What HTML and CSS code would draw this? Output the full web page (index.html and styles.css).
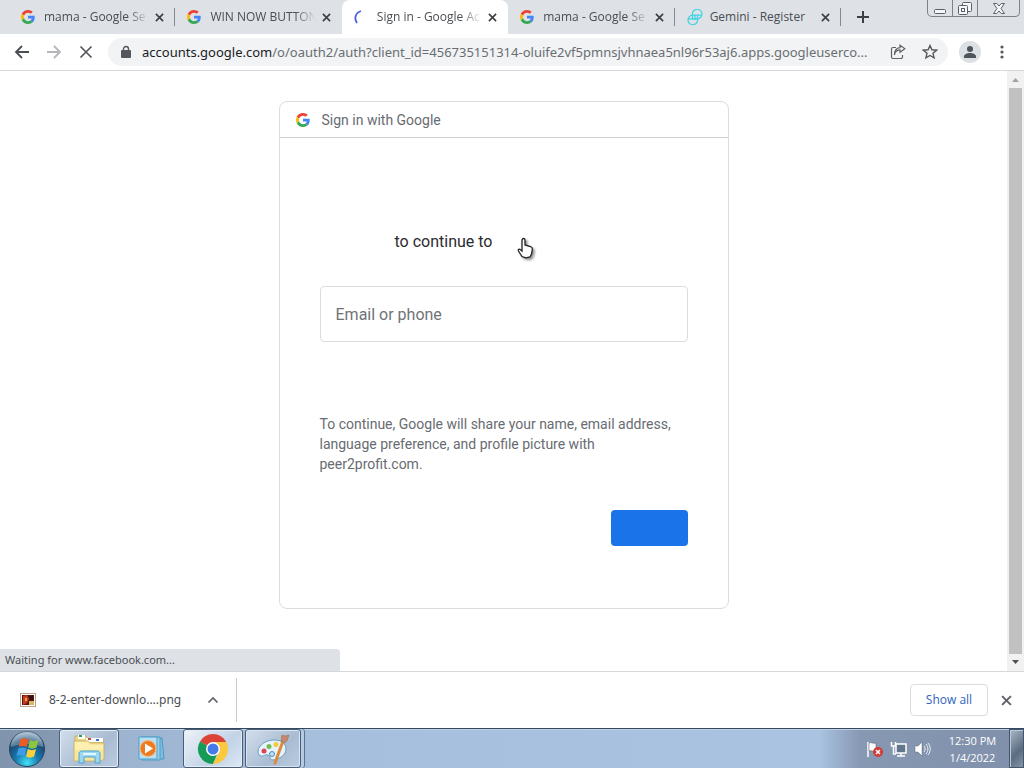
FILE: index.html
```html
<!DOCTYPE html>
<html lang="en">
<head>
<meta charset="utf-8">
<meta name="viewport" content="width=device-width, initial-scale=1">
<title>Sign in - Google Accounts</title>
<link rel="stylesheet" href="styles.css">
</head>
<body>
<svg class="defs" aria-hidden="true">
  <symbol id="google" viewBox="0 0 48 48">
    <path fill="#ea4335" d="M24 9.500c3.540 0 6.710 1.220 9.210 3.600l6.850-6.850C35.900 2.380 30.470 0 24 0 14.620 0 6.510 5.380 2.560 13.220l7.980 6.190C12.430 13.720 17.740 9.500 24 9.500z"/>
    <path fill="#4285f4" d="M46.980 24.550c0-1.570-.15-3.090-.38-4.550H24v9.020h12.940c-.58 2.960-2.260 5.480-4.780 7.180l7.730 6c4.510-4.180 7.090-10.360 7.090-17.650z"/>
    <path fill="#fbbc05" d="M10.530 28.590c-.48-1.450-.76-2.990-.76-4.590s.27-3.140.76-4.590l-7.980-6.190C.92 16.460 0 20.120 0 24s.92 7.540 2.560 10.780l7.970-6.190z"/>
    <path fill="#34a853" d="M24 48c6.480 0 11.930-2.130 15.890-5.810l-7.730-6c-2.150 1.450-4.920 2.300-8.160 2.300-6.260 0-11.570-4.220-13.470-9.910l-7.980 6.190C6.510 42.620 14.620 48 24 48z"/>
  </symbol>
  <symbol id="close" viewBox="0 0 10 10"><path d="M1 1l8 8M9 1L1 9" fill="none" stroke="currentColor" stroke-width="1.800"/></symbol>
</svg>

<header class="tabstrip">
  <nav class="tabs" aria-label="Tabs">
    <div class="tab"><svg class="favicon"><use href="#google"/></svg><a href="#" class="tab-title">mama - Google Se</a><button class="tab-close" aria-label="Close tab"><svg><use href="#close"/></svg></button></div>
    <div class="tab before-active"><svg class="favicon"><use href="#google"/></svg><a href="#" class="tab-title">WIN NOW BUTTON</a><button class="tab-close" aria-label="Close tab"><svg><use href="#close"/></svg></button></div>
    <div class="tab active"><svg class="favicon" viewBox="0 0 14 14"><path d="M7 1C1 3 0 9 3 13" fill="none" stroke="#4a5ee0" stroke-width="1.800"/></svg><a href="#" class="tab-title">Sign in - Google Ac</a><button class="tab-close" aria-label="Close tab"><svg><use href="#close"/></svg></button></div>
    <div class="tab"><svg class="favicon"><use href="#google"/></svg><a href="#" class="tab-title">mama - Google Se</a><button class="tab-close" aria-label="Close tab"><svg><use href="#close"/></svg></button></div>
    <div class="tab"><svg class="favicon gemini" viewBox="0 0 16 16"><g fill="none" stroke="#3fd3e3" stroke-width="1.200"><path d="M5.500 9.800V6A4.800 4.800 0 1 1 10.800 9.800H5.500z"/><path d="M10.500 6.200V10A4.800 4.800 0 1 1 5.200 6.200h5.300zM6.500 6.200h8.300M1.200 9.800h8.300M8 6.200v3.600"/></g></svg><a href="#" class="tab-title">Gemini - Register</a><button class="tab-close" aria-label="Close tab"><svg><use href="#close"/></svg></button></div>
  </nav>
  <button class="new-tab" aria-label="New tab"><svg viewBox="0 0 12 12"><path d="M6 0v12M0 6h12" stroke="currentColor" stroke-width="2"/></svg></button>
  <div class="window-controls">
    <button aria-label="Minimize"><svg viewBox="0 0 14 14"><rect x="1.500" y="8.500" width="11" height="4" rx="1" fill="#f6f7f9" stroke="#5c6067"/></svg></button>
    <button aria-label="Restore"><svg viewBox="0 0 14 14"><g fill="#f6f7f9" stroke="#5c6067"><rect x="4.500" y="1.500" width="9" height="9" rx="1"/><rect x=".5" y="4.500" width="9" height="9" rx="1"/><rect x="3.500" y="7.500" width="3" height="3"/></g></svg></button>
    <button class="wide" aria-label="Close window"><svg viewBox="0 0 14 14"><path d="M1.500 2.500h3.200L7 5l2.300-2.500h3.200L9 7.500l3.500 5H9.300L7 10l-2.300 2.500H1.500L5 7.500z" fill="#f6f7f9" stroke="#5c6067"/></svg></button>
  </div>
</header>

<div class="toolbar">
  <button class="tool" aria-label="Back"><svg viewBox="0 0 16 16"><path d="M15 8H2M8 2L2 8l6 6" fill="none" stroke="#4a4d51" stroke-width="1.800"/></svg></button>
  <button class="tool" aria-label="Forward"><svg viewBox="0 0 16 16"><path d="M1 8h13M8 2l6 6-6 6" fill="none" stroke="#b4b6b9" stroke-width="1.800"/></svg></button>
  <button class="tool" aria-label="Stop loading"><svg viewBox="0 0 16 16"><path d="M2.500 2.500l11 11M13.500 2.500l-11 11" fill="none" stroke="#54575b" stroke-width="1.700"/></svg></button>
  <div class="omnibox">
    <svg class="lock" viewBox="0 0 10 14"><path d="M2.500 6V4a2.500 2.500 0 0 1 5 0v2" fill="none" stroke="#54575b" stroke-width="1.400"/><rect x="0" y="5" width="10" height="8" rx="1" fill="#54575b"/></svg>
    <div class="url" role="textbox" contenteditable="true" aria-label="Address bar" spellcheck="false"><span class="host">accounts.google.com</span>/o/oauth2/auth?client_id=456735151314-oluife2vf5pmnsjvhnaea5nl96r53aj6.apps.googleuserco...</div>
    <button class="tool" aria-label="Share"><svg viewBox="0 0 16 16"><path d="M6 3.500H3A1.500 1.500 0 0 0 1.500 5v8A1.500 1.500 0 0 0 3 14.500h8a1.500 1.500 0 0 0 1.500-1.500v-2M4.500 11c.3-3.500 2-5 5.500-5.200V8.300L14.800 4.800 10 1.300v2.300C6.200 4 4.500 6.500 4.500 11z" fill="none" stroke="#5f6368" stroke-width="1.200"/></svg></button>
    <button class="tool" aria-label="Bookmark"><svg viewBox="0 0 16 16"><path d="M8 1.500l1.900 4.300 4.700.4-3.600 3.100 1.100 4.600L8 11.500l-4.100 2.400L5 9.300 1.400 6.200l4.700-.4z" fill="none" stroke="#54575b" stroke-width="1.400"/></svg></button>
  </div>
  <button class="avatar" aria-label="Profile"><svg viewBox="0 0 22 22"><circle cx="11" cy="11" r="11" fill="#dcdfe3"/><circle cx="11" cy="8" r="3" fill="#4d545c"/><path d="M5 17v-1.500c0-2 3-3.500 6-3.500s6 1.500 6 3.500V17z" fill="#4d545c"/></svg></button>
  <button class="tool" aria-label="Menu"><svg viewBox="0 0 16 16"><g fill="#54575b"><circle cx="8" cy="3" r="1.600"/><circle cx="8" cy="8" r="1.600"/><circle cx="8" cy="13" r="1.600"/></g></svg></button>
</div>

<div class="viewport">
  <main class="page">
    <section class="card">
      <div class="card-head"><svg class="brand"><use href="#google"/></svg>Sign in with Google</div>
      <form class="card-body">
        <p class="continue">to continue to</p>
        <input class="email" type="text" aria-label="Email or phone" placeholder="Email or phone">
        <p class="disclosure">To continue, Google will share your name, email address, language preference, and profile picture with peer2profit.com.</p>
        <button class="next" type="button" aria-label="Next"></button>
      </form>
    </section>
  </main>
  <div class="scrollbar">
    <svg class="arrow" viewBox="0 0 17 17"><path d="M5 11l3.500-4 3.500 4z" fill="#a3a3a3"/></svg>
    <div class="thumb"></div>
    <svg class="arrow" viewBox="0 0 17 17"><path d="M5 6l3.500 4L12 6z" fill="#505050"/></svg>
  </div>
  <div class="status">Waiting for www.facebook.com...</div>
  <svg class="cursor" viewBox="0 0 18 22"><path d="M5 19.500L1.500 14c-.8-1.500.8-2.500 2-1.300L5 14V3c0-2 3-2 3 0v5l5.500 1.500c1.500.5 2 1.500 1.800 3L14.500 17l-1.500 3-4 .8z" fill="#fff" stroke="#222" stroke-width="1.300"/></svg>
</div>

<section class="shelf" aria-label="Downloads">
  <div class="download">
    <svg class="thumbnail" viewBox="0 0 16 14"><rect x=".5" y=".5" width="15" height="13" fill="#fff" stroke="#b9a184"/><path d="M2 2h12v10H2z" fill="#5c1410"/><path d="M3 3l4-1 2 4-2 4-4 2z" fill="#c63a20"/><path d="M9 3l4-1v4l-3 1z" fill="#301410"/><path d="M9 8h5v4H9z" fill="#d5bb60"/><path d="M5 5h2v3H5z" fill="#f1a34a"/></svg>
    <a href="#" class="file-name">8-2-enter-downlo....png</a>
    <button class="chevron" aria-label="Download options"><svg viewBox="0 0 12 12"><path d="M1.500 8.500L6 4l4.500 4.500" fill="none" stroke="#5f6368" stroke-width="1.700"/></svg></button>
  </div>
  <button class="show-all">Show all</button>
  <button class="shelf-close" aria-label="Close downloads"><svg><use href="#close"/></svg></button>
</section>

<footer class="taskbar">
  <button class="start" aria-label="Start"><svg viewBox="0 0 38 38">
    <defs><radialGradient id="orb" cx=".5" cy=".9" r=".85"><stop offset="0" stop-color="#45e0f4"/><stop offset=".4" stop-color="#167bb2"/><stop offset=".75" stop-color="#1c4b74"/><stop offset="1" stop-color="#8ba9c3"/></radialGradient></defs>
    <circle cx="19" cy="19" r="17.500" fill="url(#orb)" stroke="#24445f"/>
    <path d="M3 17a16 16 0 0 1 32 0c-10-4-22-4-32 0z" fill="#fff" opacity=".28"/>
    <path d="M12.500 9.500c3-2 5.500-1.500 8 0l-1.800 7.500c-2.500-1.500-5-1.500-8 0z" fill="#ee5a24"/>
    <path d="M22 10c3 1.500 5.500 1.500 8.500 0l-2 7.500c-3 1.500-5.500 1.500-8.300 0z" fill="#8cc63e"/>
    <path d="M10.300 18.500c3-1.500 5.500-1.500 8 0L16.500 26c-2.500-1.500-5-1.500-8 0z" fill="#3f9be8"/>
    <path d="M19.800 19c3 1.500 5.500 1.500 8.300 0l-2 7.500c-3 1.500-5.500 1.500-8 0z" fill="#fbd13a"/>
  </svg></button>
  <button class="task open" aria-label="Windows Explorer"><svg viewBox="0 0 34 32">
    <path d="M3 7V3h11l2 3h15v4H3z" fill="#ead588" stroke="#b99c48" stroke-width=".6"/>
    <path d="M6 2h7v4H6zM14 5h9v4h-9zM23 5h8v4h-8z" fill="#fff"/><path d="M7 2h3v2H7z" fill="#2f9a53"/><path d="M16 5h3v2h-3z" fill="#c94937"/><path d="M24 6h3v2h-3z" fill="#3e74c9"/>
    <path d="M2 8h14l2 2h14v16l-3 2H2z" fill="#f6e59a" stroke="#c5aa58" stroke-width=".7"/><path d="M3 9h12l3 3h13v5H3z" fill="#fff3b8" opacity=".7"/>
    <path d="M7 30v-9c0-2 1-3 3-3h15c2 0 3 1 3 3v9h-5v-6H12v6z" fill="#9bd7f2" stroke="#4ba3cf"/><path d="M11 21h13" stroke="#e2f7ff" stroke-width="2"/>
  </svg></button>
  <button class="task" aria-label="Windows Media Player"><svg viewBox="0 0 34 32">
    <path d="M11 5h17l2 21H13z" fill="#83bde0" stroke="#4a98c2"/><path d="M8 4h18v23H8z" fill="#9bcfea" stroke="#4b9bc6"/><path d="M5 4h18v22H5z" fill="#b9dff2" stroke="#4b9fcb"/>
    <circle cx="14" cy="15.500" r="8" fill="#ee7b20" stroke="#f4bd84"/><path d="M11 10.500v10l8-5z" fill="#fff"/>
  </svg></button>
  <button class="task open bright" aria-label="Google Chrome"><svg viewBox="0 0 32 32">
    <path d="M16 16L3 8.500A15 15 0 0 1 29 8.500L22.500 16z" fill="#dc4437"/>
    <path d="M16 16L3 8.500A15 15 0 0 0 16 31l5-12z" fill="#159a57"/>
    <path d="M16 9h13.300A15 15 0 0 1 16 31l6-12z" fill="#fbc93d"/>
    <circle cx="16" cy="16" r="7" fill="#fff"/><circle cx="16" cy="16" r="5.500" fill="#437bea"/>
  </svg></button>
  <button class="task open stacked" aria-label="Paint"><svg viewBox="0 0 34 32">
    <path d="M18 7c8 0 12 4 12 9 0 6-6 10-13 11-4 0-2-4-5-5s-6 3-9 0C-1 15 8 7 18 7z" fill="#e7f2fa" stroke="#6a9dbd"/>
    <circle cx="8" cy="18" r="2.500" fill="#d9465c"/><circle cx="13" cy="13.500" r="2.500" fill="#72bd50"/><circle cx="20" cy="11.500" r="2.500" fill="#f0cd3a"/><circle cx="16" cy="21" r="2.500" fill="#bcdff2" stroke="#4d91bd"/>
    <path d="M27 8L19 30" stroke="#dc8a3c" stroke-width="3" stroke-linecap="round"/><path d="M25 8l1-6 3 1 4-1-2 6-3 2z" fill="#c28b70" stroke="#a37058" stroke-width=".6"/>
  </svg></button>
  <div class="tray">
    <button aria-label="Action Center"><svg viewBox="0 0 18 18"><path d="M2 2v15" stroke="#fff" stroke-width="1.500"/><path d="M3 3c3-1 4 1 7 0v8c-3 1-4-1-7 0z" fill="#fff" stroke="#46576c" stroke-width=".5"/><circle cx="12" cy="12" r="5" fill="#d23a35"/><path d="M10 10l4 4m0-4l-4 4" stroke="#fff" stroke-width="1.500"/></svg></button>
    <button aria-label="Network"><svg viewBox="0 0 18 18"><path d="M6 4h10v9H6z" fill="#62758d" stroke="#fff" stroke-width="1.500"/><path d="M11 13v3M7 16h8M1.500 2v4h4V2M3.500 6v8H6" fill="none" stroke="#fff" stroke-width="1.500"/></svg></button>
    <button aria-label="Volume"><svg viewBox="0 0 18 18"><path d="M1 6h3l4-4v14l-4-4H1z" fill="#fff" stroke="#44566b" stroke-width=".4"/><path d="M10 6c1.500 2 1.500 4 0 6M12 4c2.500 3 2.500 7 0 10M14 3c3 4 3 8 0 12" fill="none" stroke="#e8eef5"/></svg></button>
  </div>
  <div class="clock"><time>12:30 PM</time><time>1/4/2022</time></div>
  <button class="desktop" aria-label="Show desktop"></button>
</footer>
</body>
</html>
```

FILE: styles.css
```css
* { box-sizing: border-box; }
body {
  margin: 0;
  min-height: 100vh;
  display: flex;
  flex-direction: column;
  background: #fff;
  color: #4a4e53;
  font: 12px/16px "Open Sans", "Noto Sans", sans-serif;
}
button { padding: 0; border: 0; background: none; color: inherit; font: inherit; }
button svg { display: block; }
a { color: inherit; text-decoration: none; }
p { margin: 0; }
.defs { display: none; }

.tabstrip { display: flex; height: 34px; padding: 0 4px 0 9px; background: #dee1e6; }
.tabs { display: flex; flex: 0 1 832px; min-width: 0; }
.tab {
  display: flex;
  flex: 1;
  align-items: center;
  min-width: 0;
  padding: 0 10px 0 12px;
  background: linear-gradient(#85898f, #85898f) right 8px / 1px 18px no-repeat;
}
.tab.before-active { background: none; }
.tab.active { background: #fff; border-radius: 8px 8px 0 0; }
.favicon { width: 14px; height: 14px; flex: none; }
.gemini { width: 16px; height: 16px; margin-right: -2px; }
.tab-title {
  flex: 1;
  min-width: 0;
  margin: 0 3px 0 9px;
  overflow: hidden;
  white-space: nowrap;
  -webkit-mask-image: linear-gradient(90deg, #000 78%, transparent 98%);
  mask-image: linear-gradient(90deg, #000 78%, transparent 98%);
}
.tab:last-child .tab-title { -webkit-mask-image: none; mask-image: none; }
.tab-close { padding: 0 1px; color: #3c4043; }
.tab-close svg { width: 9px; height: 9px; }
.new-tab { width: 44px; display: grid; place-items: center; color: #3c4043; }
.new-tab svg { width: 12px; height: 12px; }
.window-controls {
  display: flex;
  height: 17px;
  margin-left: auto;
  border: 1px solid #7d8188;
  border-top: 0;
  border-radius: 0 0 5px 5px;
}
.window-controls button { width: 25px; display: grid; place-items: center; border-right: 1px solid #7d8188; }
.window-controls .wide { width: 41px; border: 0; }
.window-controls svg { width: 14px; height: 14px; }

.toolbar {
  display: flex;
  align-items: center;
  height: 37px;
  padding: 0 6px;
  border-bottom: 1px solid #d6d8db;
}
.tool { width: 32px; height: 28px; flex: none; display: grid; place-items: center; }
.tool svg { width: 16px; height: 16px; }
.omnibox {
  display: flex;
  flex: 1;
  align-items: center;
  min-width: 0;
  height: 28px;
  margin: 0 11px 0 6px;
  padding: 0 2px 0 13px;
  border-radius: 14px;
  background: #f1f3f4;
}
.lock { width: 10px; height: 14px; flex: none; }
.url {
  flex: 1;
  min-width: 0;
  margin-left: 11px;
  overflow: hidden;
  white-space: nowrap;
  color: #6a6e73;
  font: 13px/20px "Noto Sans", "Open Sans", sans-serif;
}
.host { color: #202124; }
.avatar svg { width: 22px; height: 22px; }
.avatar + .tool { margin-left: 5px; }

.viewport { position: relative; display: flex; flex: 1; }
.page { flex: 1; padding: 30px 16px 62px; }
.card {
  max-width: 450px;
  margin: 0 auto;
  border: 1px solid #dadce0;
  border-radius: 8px;
  color: #686c71;
  font: 14px/20px Roboto, sans-serif;
}
.card-head { display: flex; align-items: center; gap: 12px; padding: 8px 16px 7px; border-bottom: 1px solid #cfd1d5; }
.brand { width: 14px; height: 14px; }
.card-body { display: flex; flex-direction: column; padding: 92px 40px 62px; }
.continue { padding-left: 75px; color: #2b2c2f; font-size: 16px; line-height: 24px; }
.email {
  width: 100%;
  height: 56px;
  margin: 32px 0 72px;
  padding: 0 15px;
  border: 1px solid #dadce0;
  border-radius: 4px;
  background: #fff;
  color: #202124;
  font: 16px/24px Roboto, sans-serif;
}
.email::placeholder { color: #6f7378; }
.next { align-self: flex-end; width: 77px; height: 36px; margin-top: 36px; border-radius: 4px; background: #1a73e8; }
.scrollbar { display: flex; flex-direction: column; width: 17px; background: #f1f1f1; }
.arrow { width: 17px; height: 17px; }
.thumb { flex: 1; margin: 0 2px; background: #c1c1c1; }
.status {
  position: absolute;
  left: 0;
  bottom: 0;
  width: 340px;
  padding: 3px 5px;
  border-radius: 0 4px 0 0;
  background: #dee1e6;
  font: 11px/16px "Noto Sans", "Open Sans", sans-serif;
}
.cursor {
  position: absolute;
  left: 517px;
  top: 166px;
  width: 18px;
  height: 22px;
  filter: drop-shadow(2px 2px 1px #0006);
}

.shelf { display: flex; align-items: center; height: 57px; padding: 0 12px 0 0; border-top: 1px solid #d6d8db; }
.download {
  display: flex;
  align-items: center;
  width: 237px;
  height: 44px;
  padding-left: 20px;
  border-right: 1px solid #c8cacd;
}
.thumbnail { width: 16px; height: 14px; }
.file-name { margin-left: 13px; white-space: nowrap; font-family: "Noto Sans", "Open Sans", sans-serif; }
.chevron { margin: 0 17px 0 auto; }
.chevron svg { width: 12px; height: 12px; }
.show-all {
  width: 78px;
  height: 32px;
  margin: 0 13px 0 auto;
  border: 1px solid #dadce0;
  border-radius: 4px;
  color: #2f64bd;
  font-weight: 500;
}
.shelf-close { color: #5f6368; }
.shelf-close svg { display: block; width: 11px; height: 11px; }

.taskbar {
  display: flex;
  height: 40px;
  border-top: 1px solid #34485f;
  background: linear-gradient(90deg, #8194ad 0, #8699b2 56px, #9db4d0 120px, #a5bfdd 320px, #a9c3e0 calc(100% - 204px), #8798b3 calc(100% - 164px), #8090aa 100%);
  box-shadow: inset 0 1px #c3d2e4;
  color: #fff;
}
.start { width: 59px; padding-left: 8px; }
.start svg { width: 38px; height: 38px; }
.task { width: 60px; margin-right: 2px; display: grid; place-items: center; border: 1px solid transparent; border-radius: 3px; }
.task svg { width: 34px; height: 32px; }
.task.open { border-color: #4b5d75; background: linear-gradient(135deg, #d2deeb, #a9bcd3 60%, #bacce0); box-shadow: inset 0 0 0 1px #e4edf7; }
.task.bright { background: linear-gradient(135deg, #edf3f9, #c2d3e6 60%, #dce8f4); }
.task.stacked { width: 56px; box-shadow: inset 0 0 0 1px #d7e5f3, 3px 0 #b5cbe3, 4px 0 #5e728c; }
.tray { display: flex; align-items: center; gap: 6px; margin-left: auto; }
.tray svg { width: 18px; height: 18px; }
.clock { display: flex; flex-direction: column; justify-content: center; width: 77px; padding-left: 4px; font-size: 11px; line-height: 17px; text-align: center; }
.desktop { width: 15px; border: 1px solid #44566d; background: linear-gradient(135deg, #aab8c8, #5b6c80 60%, #8494a8); box-shadow: inset 1px 1px #bac8d8; }
```
